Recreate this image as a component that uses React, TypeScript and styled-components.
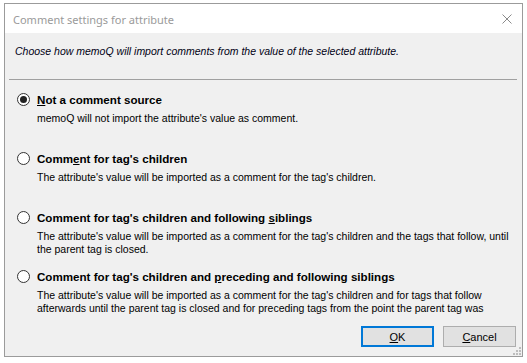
import React from "react";
import styled, { createGlobalStyle } from "styled-components";

//Global
const GlobalStyle = createGlobalStyle`
  html, body {
    margin: 0;
    padding: 0;
    background: #ffffff;
  }
  body {
    font-family: "Liberation Sans", Arial, sans-serif;
  }
`;

//Styled Components
const Page = styled.div`
  width: 527px;
  height: 363px;
  padding: 3px 0 0 4px;
  box-sizing: border-box;
`;

const Window = styled.div`
  position: relative;
  width: 519px;
  height: 354px;
  box-sizing: border-box;
  border: 1px solid #9b9b9b;
  background: #f0f0f0;
  display: flex;
  flex-direction: column;
  overflow: hidden;
`;

const TitleBar = styled.div`
  height: 29px;
  flex: none;
  background: #ffffff;
  display: flex;
  align-items: center;
  justify-content: space-between;
  padding: 0 10px 0 8px;
`;

const Title = styled.span`
  font-family: "Noto Sans", "Open Sans", sans-serif;
  font-size: 11px;
  color: #9a9a9a;
  padding-top: 1px;
`;

const CloseIcon = styled.svg`
  width: 10px;
  height: 10px;
  margin-top: 1px;
`;

const Header = styled.div`
  height: 46px;
  flex: none;
  display: flex;
  align-items: center;
  padding: 0 0 10px 10px;
  box-sizing: border-box;
`;

const HeaderText = styled.span`
  font-size: 10.5px;
  font-style: italic;
  color: #000014;
`;

const Separator = styled.div`
  height: 1px;
  flex: none;
  margin: 0 5px 0 4px;
  background: #a0a0a0;
`;

const Body = styled.div`
  flex: 1;
  overflow: hidden;
  padding: 11px 6px 0 12px;
`;

const Option = styled.div`
  height: 59px;
`;

const RadioRow = styled.div`
  height: 16px;
  display: flex;
  align-items: center;
  gap: 7px;
`;

const Radio = styled.span<{ $checked?: boolean }>`
  width: 13px;
  height: 13px;
  box-sizing: border-box;
  border-radius: 50%;
  border: 1px solid #333333;
  background: #ffffff;
  display: flex;
  align-items: center;
  justify-content: center;
  flex: none;

  &::after {
    content: "";
    width: 7px;
    height: 7px;
    border-radius: 50%;
    background: #222222;
    display: ${(p) => (p.$checked ? "block" : "none")};
  }
`;

const Label = styled.span`
  font-size: 11.6px;
  font-weight: bold;
  color: #000000;
`;

const Description = styled.div`
  margin: 5px 0 0 20px;
  font-size: 10.5px;
  line-height: 13px;
  color: #000000;
`;

const Footer = styled.div`
  height: 40px;
  flex: none;
  box-sizing: border-box;
  display: flex;
  justify-content: flex-end;
  align-items: flex-start;
  gap: 9px;
  padding: 10px 6px 0 0;
`;

const Button = styled.button<{ $default?: boolean }>`
  width: 73px;
  height: 21px;
  box-sizing: border-box;
  padding: 0;
  background: #e1e1e1;
  border: ${(p) => (p.$default ? "2px solid #0078d7" : "1px solid #adadad")};
  font-family: "Liberation Sans", Arial, sans-serif;
  font-size: 11px;
  color: #000000;
`;

const Grip = styled.svg`
  position: absolute;
  right: 1px;
  bottom: 1px;
  width: 8px;
  height: 8px;
`;

const options = [
  {
    label: (
      <>
        <u>N</u>ot a comment source
      </>
    ),
    text: "memoQ will not import the attribute's value as comment.",
    checked: true,
  },
  {
    label: (
      <>
        Comm<u>e</u>nt for tag's children
      </>
    ),
    text: "The attribute's value will be imported as a comment for the tag's children.",
  },
  {
    label: (
      <>
        Comment for tag's children and following <u>s</u>iblings
      </>
    ),
    text: "The attribute's value will be imported as a comment for the tag's children and the tags that follow, until the parent tag is closed.",
  },
  {
    label: (
      <>
        Comment for tag's children and <u>p</u>receding and following siblings
      </>
    ),
    text: "The attribute's value will be imported as a comment for the tag's children and for tags that follow afterwards until the parent tag is closed and for preceding tags from the point the parent tag was",
  },
];

const App: React.FC = () => {
  return (
    <>
      <GlobalStyle />
      <Page>
        <Window>
          <TitleBar>
            <Title>Comment settings for attribute</Title>
            <CloseIcon viewBox="0 0 10 10">
              <path d="M0.5 0.5 L9.5 9.5 M9.5 0.5 L0.5 9.5" stroke="#8a8a8a" strokeWidth="1" />
            </CloseIcon>
          </TitleBar>
          <Header>
            <HeaderText>Choose how memoQ will import comments from the value of the selected attribute.</HeaderText>
          </Header>
          <Separator />
          <Body>
            {options.map((o, i) => (
              <Option key={i}>
                <RadioRow>
                  <Radio $checked={o.checked} />
                  <Label>{o.label}</Label>
                </RadioRow>
                <Description>{o.text}</Description>
              </Option>
            ))}
          </Body>
          <Footer>
            <Button $default>
              <u>O</u>K
            </Button>
            <Button>
              <u>C</u>ancel
            </Button>
          </Footer>
          <Grip viewBox="0 0 8 8">
            <rect x="6" y="0" width="2" height="2" fill="#bdbdbd" />
            <rect x="3" y="3" width="2" height="2" fill="#bdbdbd" />
            <rect x="6" y="3" width="2" height="2" fill="#bdbdbd" />
            <rect x="0" y="6" width="2" height="2" fill="#bdbdbd" />
            <rect x="3" y="6" width="2" height="2" fill="#bdbdbd" />
            <rect x="6" y="6" width="2" height="2" fill="#bdbdbd" />
          </Grip>
        </Window>
      </Page>
    </>
  );
};

export default App;
